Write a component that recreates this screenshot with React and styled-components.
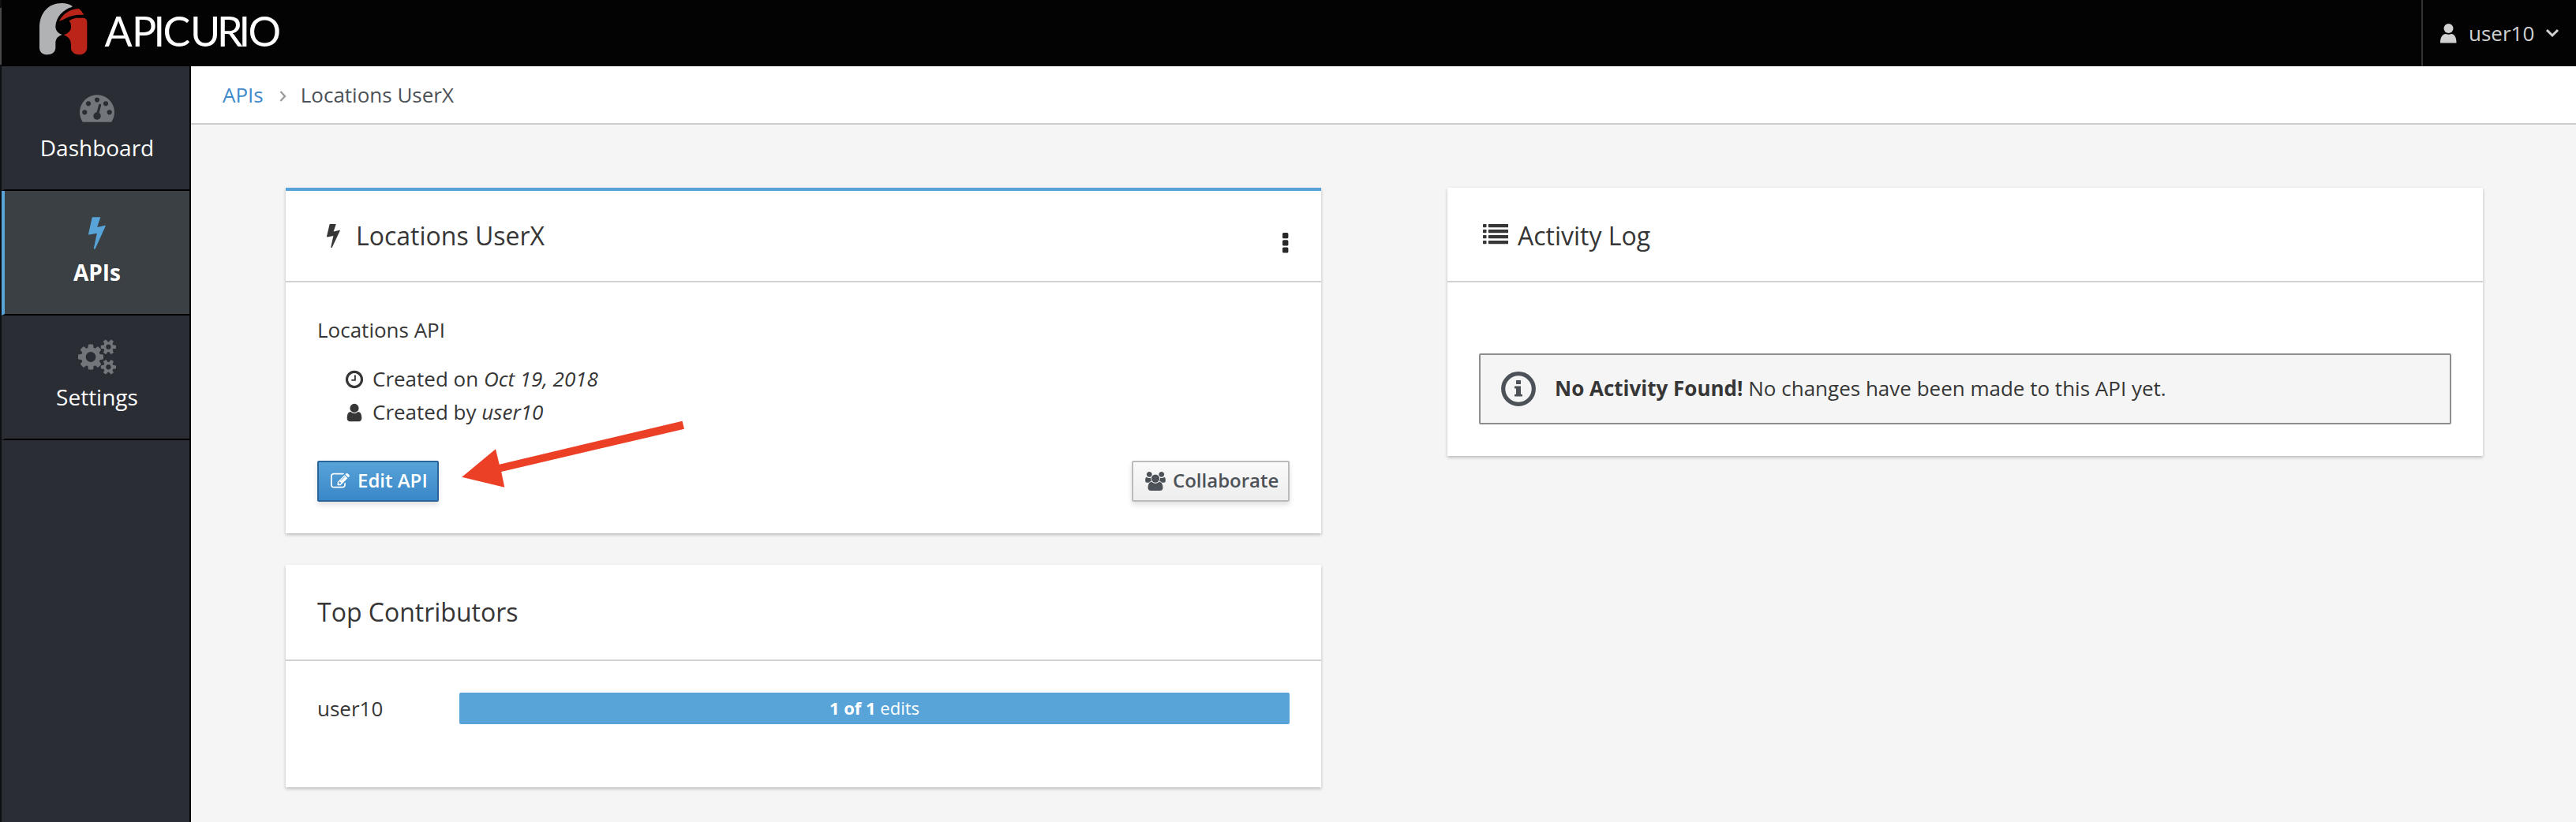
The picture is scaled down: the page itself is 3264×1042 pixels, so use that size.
import React from 'react';
import styled, { createGlobalStyle, css } from 'styled-components';

const GlobalStyle = createGlobalStyle`
  * { box-sizing: border-box; }
  body {
    margin: 0;
    background: #f5f5f5;
    color: #363636;
    font-family: "Open Sans", "Noto Sans", sans-serif;
    font-size: 26px;
  }
  svg { display: block; flex: none; fill: currentColor; }
`;

const Frame = styled.div`
  display: flex;
  flex-direction: column;
  height: 1042px;
  overflow: hidden;
  padding-left: 2px;
  background: linear-gradient(#111 0 10px, #4a4a4a 10px 82px, #0d0e12 82px) 0 0 / 2px 100% no-repeat;
`;

const Masthead = styled.header`
  display: flex;
  justify-content: space-between;
  height: 84px;
  background: #030303;
`;

const Brand = styled.a`
  display: flex;
  padding: 4px 0 0 48px;
`;

const Wordmark = styled.svg`
  font-family: Lato, sans-serif;
  font-size: 52px;
  font-weight: 400;
  fill: #fff;
`;

const UserMenu = styled.div`
  display: flex;
  align-items: center;
  width: 196px;
  padding-left: 22px;
  border-left: 2px solid #333;
  color: #d1d1d1;
  span { margin: 0 14px 0 15px; }
`;

const Workspace = styled.div`
  display: flex;
  flex: 1;
`;

const Sidebar = styled.nav`
  width: 240px;
  background: #2a2d34;
  border-right: 2px solid #030303;
`;

const NavItem = styled.a`
  display: flex;
  flex-direction: column;
  align-items: center;
  height: 158px;
  padding-top: 30px;
  border-bottom: 2px solid #030303;
  border-left: 4px solid ${(p) => (p.$active ? '#58a3d7' : 'transparent')};
  background: ${(p) => (p.$active ? '#3a4043' : 'transparent')};
  background-clip: padding-box;
  color: ${(p) => (p.$active ? '#58a3d7' : '#72767b')};
`;

const NavIcon = styled.span`
  display: flex;
  height: 44px;
`;

const NavLabel = styled.span`
  margin-top: 9px;
  font-size: 28px;
  line-height: 40px;
  color: #fff;
  font-weight: ${(p) => (p.$active ? 700 : 400)};
`;

const Content = styled.main`
  flex: 1;
`;

const Breadcrumb = styled.div`
  display: flex;
  align-items: center;
  height: 74px;
  padding-left: 40px;
  background: #fff;
  border-bottom: 2px solid #cbcbcb;
  color: #4d5258;
  a { color: #4089cb; }
  svg { margin: 4px 18px 0 20px; color: #9c9c9c; }
`;

const Columns = styled.div`
  display: flex;
  gap: 160px;
  padding: 80px 118px 0 120px;
`;

const Column = styled.div`
  display: flex;
  flex-direction: column;
  gap: 40px;
  width: 1312px;
`;

const Card = styled.section`
  height: ${(p) => p.$height}px;
  background: #fff;
  box-shadow: 0 2px 4px rgba(3, 3, 3, 0.24);
  ${(p) => p.$accent && css`border-top: 4px solid #58a3d7;`}
`;

const CardHeader = styled.div`
  display: flex;
  align-items: center;
  height: ${(p) => p.$height}px;
  padding: 0 40px;
  border-bottom: 2px solid #d1d1d1;
`;

const HeaderIcon = styled.svg`
  margin-left: ${(p) => p.$indent || 0}px;
`;

const CardTitle = styled.h2`
  margin: ${(p) => p.$drop || 0}px auto 0 ${(p) => p.$gap || 0}px;
  font-size: 32px;
  font-weight: 400;
  line-height: 40px;
`;

const Kebab = styled.button`
  display: flex;
  padding: 0;
  margin: 17px 1px 0 0;
  border: 0;
  background: none;
  color: #292929;
`;

const ApiBody = styled.div`
  display: flex;
  flex-direction: column;
  padding: 40px 40px 0;
`;

const Description = styled.p`
  margin: 0;
  line-height: 40px;
`;

const Facts = styled.ul`
  display: flex;
  flex-direction: column;
  margin: 21px 0 0;
  padding: 0 0 0 34px;
  list-style: none;
`;

const Fact = styled.li`
  display: flex;
  align-items: center;
  gap: 10px;
  height: 42px;
  svg { margin-top: 1px; }
  em { font-style: italic; }
`;

const Actions = styled.div`
  display: flex;
  justify-content: space-between;
  margin-top: 41px;
`;

const Button = styled.button`
  display: flex;
  align-items: center;
  height: 52px;
  width: ${(p) => p.$width}px;
  padding: 0 0 3px 15px;
  gap: ${(p) => (p.$primary ? 10 : 9)}px;
  border: 2px solid ${(p) => (p.$primary ? '#2a6599' : '#bbb')};
  border-radius: 2px;
  background: ${(p) => (p.$primary ? 'linear-gradient(#58a3d7, #3a87c9)' : 'linear-gradient(#fafafa, #ededed)')};
  box-shadow: 0 4px 6px rgba(3, 3, 3, 0.12);
  color: ${(p) => (p.$primary ? '#fff' : '#4d5258')};
  font: 600 24px/40px "Open Sans", "Noto Sans", sans-serif;
  white-space: nowrap;
  svg { margin-top: 3px; }
`;

const Contributor = styled.div`
  display: flex;
  align-items: center;
  height: 40px;
  margin: 40px 40px 0;
`;

const ContributorName = styled.span`
  width: 180px;
`;

const Progress = styled.div`
  flex: 1;
  height: 40px;
  border-radius: 2px;
  background: #58a3d7;
  color: #fff;
  font-size: 22px;
  line-height: 39px;
  text-align: center;
`;

const Alert = styled.div`
  display: flex;
  align-items: center;
  height: 90px;
  margin: 90px 40px 0;
  padding-left: 26px;
  border: 2px solid #8b8d8f;
  border-radius: 2px;
  background: #f5f5f5;
  white-space: pre;
  svg { color: #4d5258; }
  span { margin: 0 0 2px 24px; }
`;

const Pointer = styled.svg`
  position: absolute;
  left: 584px;
  top: 532px;
`;

const Glyph = ({ w, h, box, d }) => (
  <svg width={w} height={h} viewBox={box}><path d={d} /></svg>
);

const GAUGE = 'M384 1152q0-53-37.5-90.5t-90.5-37.5-90.5 37.5-37.5 90.5 37.5 90.5 90.5 37.5 90.5-37.5 37.5-90.5zm192-448q0-53-37.5-90.5t-90.5-37.5-90.5 37.5-37.5 90.5 37.5 90.5 90.5 37.5 90.5-37.5 37.5-90.5zm428 481l101-382q6-26-7.5-48.5t-38.5-29.5-48 6.5-30 39.5l-101 382q-60 5-107 43.5t-63 98.5q-20 77 20 146t117 89 146-20 89-117q16-60-6-117t-72-91zm660-33q0-53-37.5-90.5t-90.5-37.5-90.5 37.5-37.5 90.5 37.5 90.5 90.5 37.5 90.5-37.5 37.5-90.5zm-640-640q0-53-37.5-90.5t-90.5-37.5-90.5 37.5-37.5 90.5 37.5 90.5 90.5 37.5 90.5-37.5 37.5-90.5zm448 192q0-53-37.5-90.5t-90.5-37.5-90.5 37.5-37.5 90.5 37.5 90.5 90.5 37.5 90.5-37.5 37.5-90.5zm320 448q0 261-141 483-19 29-54 29h-1402q-35 0-54-29-141-221-141-483 0-182 71-348t191-286 286-191 348-71 348 71 286 191 191 286 71 348z';
const COGS = 'M896 896q0-106-75-181t-181-75-181 75-75 181 75 181 181 75 181-75 75-181zm768 512q0-52-38-90t-90-38-90 38-38 90q0 53 37.5 90.5t90.5 37.5 90.5-37.5 37.5-90.5zm0-1024q0-52-38-90t-90-38-90 38-38 90q0 53 37.5 90.5t90.5 37.5 90.5-37.5 37.5-90.5zm-384 421v185q0 10-7 19.5t-16 10.5l-155 24q-11 35-32 76 34 48 90 115 7 11 7 20 0 12-7 19-23 30-82.5 89.5t-78.5 59.5q-11 0-21-7l-115-90q-37 19-77 31-11 108-23 155-7 24-30 24h-186q-11 0-20-7.5t-10-17.5l-23-153q-34-10-75-31l-118 89q-7 7-20 7-11 0-21-8-144-133-144-160 0-9 7-19 10-14 41-53t47-61q-23-44-35-82l-152-24q-10-1-17-9.5t-7-19.5v-185q0-10 7-19.5t16-10.5l155-24q11-35 32-76-34-48-90-115-7-11-7-20 0-12 7-20 22-30 82-89t79-59q11 0 21 7l115 90q34-18 77-32 11-108 23-154 7-24 30-24h186q11 0 20 7.5t10 17.5l23 153q34 10 75 31l118-89q8-7 20-7 11 0 21 8 144 133 144 160 0 8-7 19-12 16-42 54t-45 60q23 48 34 82l152 23q10 2 17 10.5t7 19.5zm640 533v140q0 16-149 31-12 27-30 52 51 113 51 138 0 4-4 7-122 71-124 71-8 0-46-47t-52-68q-20 2-30 2t-30-2q-14 21-52 68t-46 47q-2 0-124-71-4-3-4-7 0-25 51-138-18-25-30-52-149-15-149-31v-140q0-16 149-31 13-29 30-52-51-113-51-138 0-4 4-7 4-2 35-20t59-34 30-16q8 0 46 46.5t52 67.5q20-2 30-2t30 2q51-71 92-112l6-2q4 0 124 70 4 3 4 7 0 25-51 138 17 23 30 52 149 15 149 31zm0-1024v140q0 16-149 31-12 27-30 52 51 113 51 138 0 4-4 7-122 71-124 71-8 0-46-47t-52-68q-20 2-30 2t-30-2q-14 21-52 68t-46 47q-2 0-124-71-4-3-4-7 0-25 51-138-18-25-30-52-149-15-149-31v-140q0-16 149-31 13-29 30-52-51-113-51-138 0-4 4-7 4-2 35-20t59-34 30-16q8 0 46 46.5t52 67.5q20-2 30-2t30 2q51-71 92-112l6-2q4 0 124 70 4 3 4 7 0 25-51 138 17 23 30 52 149 15 149 31z';
const BOLT = 'M17 0H45Q47 0 46 2L34 39L65 32Q67 32 66 35L27 121Q25 124 22 123Q20 122 21 119L33 62L3 68Q0 68 0 65L14 2Q15 0 17 0Z';
const CLOCK = 'M1024 544v448q0 14-9 23t-23 9h-320q-14 0-23-9t-9-23v-64q0-14 9-23t23-9h224v-352q0-14 9-23t23-9h64q14 0 23 9t9 23zm416 352q0-148-73-273t-198-198-273-73-273 73-198 198-73 273 73 273 198 198 273 73 273-73 198-198 73-273zm224 0q0 209-103 385.5t-279.5 279.5-385.5 103-385.5-103-279.5-279.5-103-385.5 103-385.5 279.5-279.5 385.5-103 385.5 103 279.5 279.5 103 385.5z';
const PERSON = 'M1536 1399q0 109-62.5 187t-150.5 78h-854q-88 0-150.5-78t-62.5-187q0-85 8.5-160.5t31.5-152 58.5-131 94-89 134.5-34.5q131 128 313 128t313-128q76 0 134.5 34.5t94 89 58.5 131 31.5 152 8.5 160.5zm-256-887q0 159-112.5 271.5t-271.5 112.5-271.5-112.5-112.5-271.5 112.5-271.5 271.5-112.5 271.5 112.5 112.5 271.5z';
const EDIT = 'M888 1184l116-116-152-152-116 116v56h96v96h56zm440-720q-16-16-33 1l-350 350q-17 17-1 33t33-1l350-350q17-17 1-33zm80 594v190q0 119-84.5 203.5t-203.5 84.5h-832q-119 0-203.5-84.5t-84.5-203.5v-832q0-119 84.5-203.5t203.5-84.5h832q63 0 117 25 15 7 18 23 3 17-9 29l-49 49q-14 14-32 8-23-6-45-6h-832q-66 0-113 47t-47 113v832q0 66 47 113t113 47h832q66 0 113-47t47-113v-126q0-13 9-22l64-64q15-15 35-7t20 29zm-96-738l288 288-672 672h-288v-288zm444 132l-92 92-288-288 92-92q28-28 68-28t68 28l152 152q28 28 28 68t-28 68z';
const GROUP = 'M593 896q-162 5-265 128h-134q-82 0-138-40.5t-56-118.5q0-353 124-353 6 0 43.5 21t97.5 42.5 119 21.5q67 0 133-23-5 37-5 66 0 139 81 256zm1071 637q0 120-73 189.5t-194 69.5h-874q-121 0-194-69.5t-73-189.5q0-53 3.5-103.5t14-109 26.5-108.5 43-97.5 62-81 85.5-53.5 111.5-20q10 0 43 21.5t73 48 107 48 135 21.5 135-21.5 107-48 73-48 43-21.5q61 0 111.5 20t85.5 53.5 62 81 43 97.5 26.5 108.5 14 109 3.5 103.5zm-1024-1277q0 106-75 181t-181 75-181-75-75-181 75-181 181-75 181 75 75 181zm704 384q0 159-112.5 271.5t-271.5 112.5-271.5-112.5-112.5-271.5 112.5-271.5 271.5-112.5 271.5 112.5 112.5 271.5zm576 225q0 78-56 118.5t-138 40.5h-134q-103-123-265-128 81-117 81-256 0-29-5-66 66 23 133 23 59 0 119-21.5t97.5-42.5 43.5-21q124 0 124 353zm-128-609q0 106-75 181t-181 75-181-75-75-181 75-181 181-75 181 75 75 181z';

const LogoMark = () => (
  <svg width="62" height="66" viewBox="150 12 186 198">
    <path fill="#b0b2b3" d="M150 106C150 48 185 12 235 12C252 12 265 16 276 24L272 27C238 38 214 64 211 100C211 116 220 128 237 132C222 136 211 146 211 164V184C209 200 197 208 180 208C162 208 150 197 150 182Z" />
    <path fill="#bb2519" d="M225 81C238 55 262 35 300 33Q312 42 319 56C290 55 262 60 240 75Q233 77 225 81Z" />
    <path fill="#bb2519" d="M263 79Q275 70 290 68H318Q331 70 331 84V182C330 198 318 208 300 208C284 208 271 198 270 184V170C270 150 258 138 242 133C258 128 271 118 270 100Q270 88 263 79Z" />
  </svg>
);

const NAV = [
  { label: 'Dashboard', icon: <Glyph w={44} h={44} box="0 0 1792 1792" d={GAUGE} /> },
  { label: 'APIs', active: true, icon: <Glyph w={22} h={44} box="0 -9 67 132" d={BOLT} /> },
  { label: 'Settings', icon: <Glyph w={48} h={45} box="0 0 1920 1792" d={COGS} /> },
];

export default function App() {
  return (
    <Frame>
      <GlobalStyle />
      <Masthead>
        <Brand>
          <LogoMark />
          <Wordmark width="250" height="70" viewBox="112 4 250 70">
            <text y="59.300" x="132.500 167 194.500 206.500 241 275 302.500 314.500">APICURIO</text>
          </Wordmark>
        </Brand>
        <UserMenu>
          <svg width="21" height="25" viewBox="0 0 21 25">
            <circle cx="10.5" cy="6" r="6" />
            <path d="M0 24.5C0 17 3 13 7 13Q10.500 14.500 14 13C18 13 20.500 17 20.500 24.500Z" />
          </svg>
          <span>user10</span>
          <svg width="18" height="12" viewBox="0 0 18 12">
            <path d="M2 2L9 9L16 2" fill="none" stroke="currentColor" strokeWidth="3" />
          </svg>
        </UserMenu>
      </Masthead>
      <Workspace>
        <Sidebar>
          {NAV.map((n) => (
            <NavItem key={n.label} $active={n.active}>
              <NavIcon>{n.icon}</NavIcon>
              <NavLabel $active={n.active}>{n.label}</NavLabel>
            </NavItem>
          ))}
        </Sidebar>
        <Content>
          <Breadcrumb>
            <a>APIs</a>
            <svg width="9" height="14" viewBox="0 0 9 14">
              <path d="M1.500 1L7 7L1.500 13" fill="none" stroke="currentColor" strokeWidth="2.400" />
            </svg>
            <span>Locations UserX</span>
          </Breadcrumb>
          <Columns>
            <Column>
              <Card $height={438} $accent>
                <CardHeader $height={116}>
                  <HeaderIcon $indent={12} width="17" height="30" viewBox="0 0 67 123" preserveAspectRatio="none"><path d={BOLT} /></HeaderIcon>
                  <CardTitle $gap={20}>Locations UserX</CardTitle>
                  <Kebab aria-label="More actions">
                    <svg width="8" height="26" viewBox="0 0 8 26">
                      {[0, 9.2, 18.4].map((y) => <rect key={y} y={y} width="7.400" height="7.200" rx="1.500" />)}
                    </svg>
                  </Kebab>
                </CardHeader>
                <ApiBody>
                  <Description>Locations API</Description>
                  <Facts>
                    <Fact>
                      <Glyph w={26} h={26} box="0 0 1792 1792" d={CLOCK} />
                      <span>Created on <em>Oct 19, 2018</em></span>
                    </Fact>
                    <Fact>
                      <Glyph w={26} h={26} box="0 0 1792 1792" d={PERSON} />
                      <span>Created by <em>user10</em></span>
                    </Fact>
                  </Facts>
                  <Actions>
                    <Button $primary $width={154}>
                      <Glyph w={24} h={24} box="0 0 1792 1792" d={EDIT} />
                      Edit API
                    </Button>
                    <Button $width={200}>
                      <Glyph w={26} h={24} box="0 0 1920 1792" d={GROUP} />
                      Collaborate
                    </Button>
                  </Actions>
                </ApiBody>
              </Card>
              <Card $height={282}>
                <CardHeader $height={122}>
                  <CardTitle>Top Contributors</CardTitle>
                </CardHeader>
                <Contributor>
                  <ContributorName>user10</ContributorName>
                  <Progress><b>1 of 1</b> edits</Progress>
                </Contributor>
              </Card>
            </Column>
            <Column>
              <Card $height={340}>
                <CardHeader $height={120}>
                  <HeaderIcon width="37" height="26" viewBox="-5 0 37 26">
                    {[0, 7, 14, 21].map((y) => (
                      <g key={y}>
                        <rect x="0" y={y} width="4.500" height="4.300" rx="0.700" />
                        <rect x="6.800" y={y} width="25.600" height="4.300" rx="0.700" />
                      </g>
                    ))}
                  </HeaderIcon>
                  <CardTitle $gap={12} $drop={3}>Activity Log</CardTitle>
                </CardHeader>
                <Alert>
                  <svg width="44" height="44" viewBox="0 0 44 44">
                    <circle cx="22" cy="22" r="19.300" fill="none" stroke="currentColor" strokeWidth="5.200" />
                    <path d="M19 11.500Q19 11 19.500 11H24.500Q25 11 25 11.500V15.500Q25 16 24.500 16H19.500Q19 16 19 15.500ZM17.500 18.600H25V28.800H26.500Q27 28.800 27 29.300V31Q27 31.500 26.500 31.500H17.500Q17 31.500 17 31V29.300Q17 28.800 17.500 28.800H19V21.400H17.500Q17 21.400 17 20.900V19.100Q17 18.600 17.500 18.600Z" />
                  </svg>
                  <span><b>No Activity Found!</b> No changes have been made to this API yet.</span>
                </Alert>
              </Card>
            </Column>
          </Columns>
        </Content>
      </Workspace>
      <Pointer width="286" height="88" viewBox="584 532 286 88">
        <path fill="#eb4026" d="M585.200 604.700L628 569.300L632.700 588.700L864.500 533.700L867 543.700L635.200 598L639.300 617.800Z" />
      </Pointer>
    </Frame>
  );
}
